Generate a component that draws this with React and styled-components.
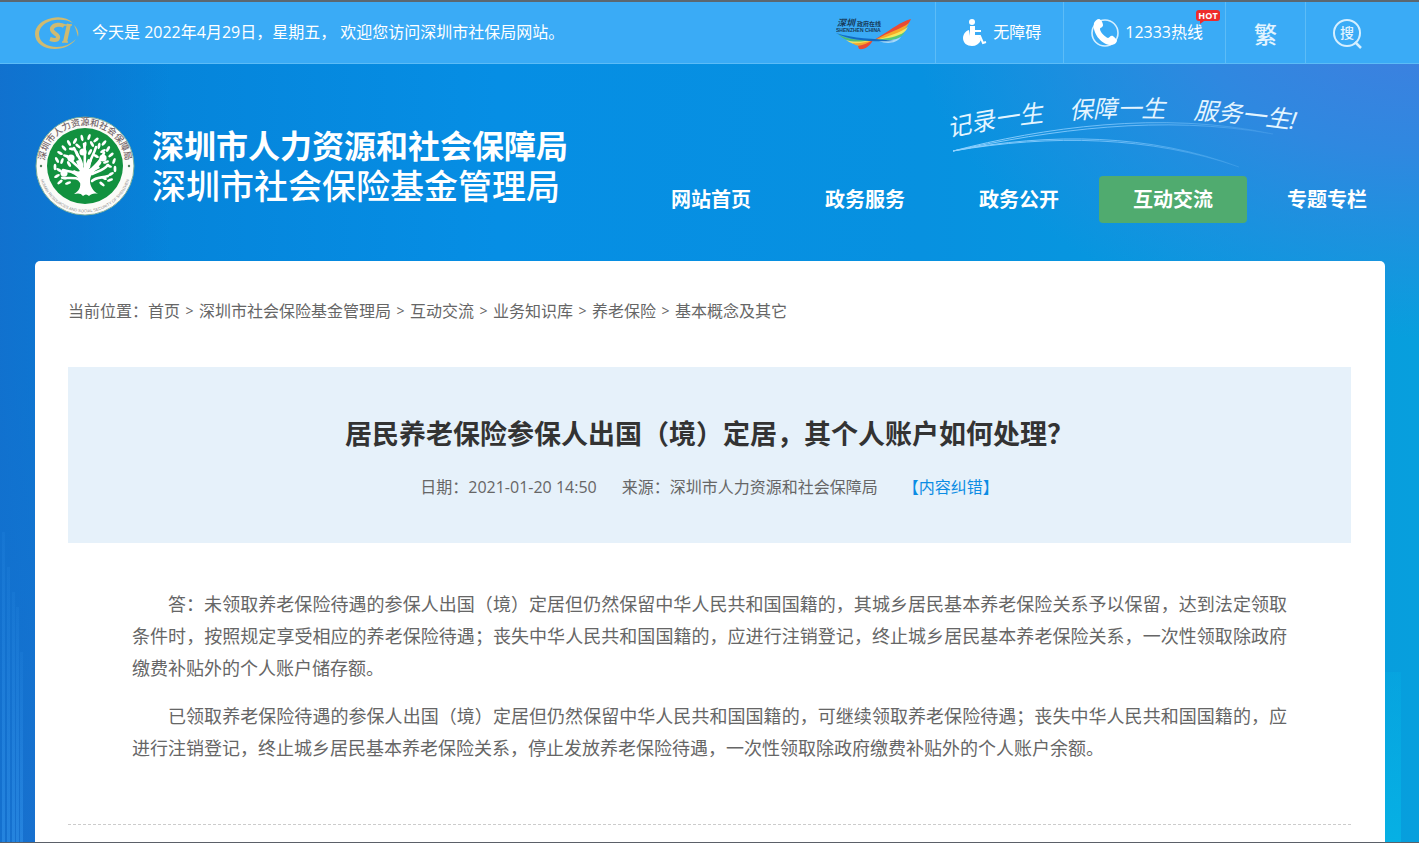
import React from "react";
import styled, { createGlobalStyle } from "styled-components";

const GlobalStyle = createGlobalStyle`
  * {
    box-sizing: border-box;
  }

  body {
    margin: 0;
    font-family: "Open Sans", "Noto Sans CJK SC", sans-serif;
    font-size: 16px;
    color: #666;
  }

  a {
    color: inherit;
    text-decoration: none;
  }
`;

const stripe = (left, height) =>
  `linear-gradient(rgba(60, 160, 245, 0.1), rgba(60, 160, 245, 0.4)) left ${left}px bottom 0 / 3px ${height}px no-repeat`;

const Page = styled.div`
  display: flex;
  flex-direction: column;
  min-height: 100vh;
  border-top: 2px solid #5b6770;
  border-bottom: 1px solid #5b6068;
  background:
    ${stripe(2, 310)},
    ${stripe(7, 275)},
    ${stripe(12, 250)},
    ${stripe(16, 235)},
    ${stripe(20, 190)},
    linear-gradient(rgba(6, 176, 228, 0.3), #06b0e4) right 18px bottom 0 / 16px 170px no-repeat,
    linear-gradient(to right, rgba(18, 112, 206, 0.9), rgba(18, 112, 206, 0) 12%),
    radial-gradient(ellipse 36% 40% at 100% 0%, #427ddf 0%, #2f88e0 45%, rgba(14, 148, 226, 0) 100%),
    linear-gradient(to bottom, rgba(44, 110, 206, 0) 45%, rgba(44, 110, 206, 0.85) 100%) left top / 35px 100% no-repeat,
    linear-gradient(to right, #0580d6 0%, #068ee4 35%, #0791e0 65%, #079fdd 100%);
`;

const TopBar = styled.div`
  display: flex;
  align-items: stretch;
  height: 62px;
  padding: 0 34px 0 35px;
  background: #3aabf6;
  border-bottom: 1px solid #5cbcf7;
  color: #fff;
`;

const Welcome = styled.div`
  display: flex;
  align-items: center;
  gap: 13px;
  flex: 1;
`;

const Label = styled.span`
  padding-bottom: 3px;
`;

const CityLink = styled.a`
  display: flex;
  align-items: center;
  padding-right: 22px;
`;

const Tool = styled.a`
  position: relative;
  display: flex;
  align-items: center;
  gap: 6px;
  padding: 0 22px 0 27px;
  border-left: 1px solid #5cbcf7;
`;

const ToolButton = styled.button`
  display: flex;
  align-items: center;
  justify-content: center;
  width: 80px;
  padding: 0;
  border: 0;
  border-left: 1px solid #5cbcf7;
  background: none;
  color: #e2f4ff;
  font-family: inherit;
  font-size: 23px;
  font-weight: 500;
  cursor: pointer;
`;

const HotBadge = styled.span`
  position: absolute;
  top: 8px;
  right: 5px;
  width: 24px;
  border-radius: 3px;
  background: #ee2b2b;
  color: #fff;
  font-size: 9px;
  font-weight: 700;
  line-height: 11px;
  text-align: center;

  &::after {
    content: "";
    position: absolute;
    left: 4px;
    top: 11px;
    border-top: 3px solid #ee2b2b;
    border-right: 4px solid transparent;
  }
`;

const Header = styled.header`
  display: flex;
  justify-content: space-between;
  padding: 32px 18px 38px 35px;
  color: #fff;
`;

const Brand = styled.a`
  display: flex;
  align-items: center;
  align-self: flex-start;
  gap: 17px;
  margin-top: 20px;
`;

const BrandNames = styled.div`
  line-height: 40px;
  white-space: nowrap;
`;

const BureauName = styled.div`
  font-size: 32px;
  font-weight: 700;
`;

const AgencyName = styled.div`
  font-size: 34px;
  font-weight: 500;
`;

const HeaderSide = styled.div`
  display: flex;
  flex-direction: column;
  align-items: flex-end;
`;

const SloganArt = styled.svg`
  display: block;
  margin-right: 80px;
  overflow: visible;
`;

const Nav = styled.nav`
  display: flex;
  gap: 6px;
`;

const NavLink = styled.a`
  width: 148px;
  border-radius: 4px;
  background: ${(props) => (props.$active ? "#50ab6f" : "transparent")};
  font-size: 20px;
  font-weight: 700;
  line-height: 47px;
  text-align: center;
`;

const Card = styled.main`
  flex: 1;
  margin: 0 34px 0 35px;
  padding: 34px 34px 0 33px;
  border-radius: 5px 5px 0 0;
  background: #fff;
`;

const Breadcrumb = styled.nav`
  display: flex;
  flex-wrap: wrap;
  margin-bottom: 40px;
  line-height: 32px;
`;

const Separator = styled.span`
  width: 19px;
  font-size: 14px;
  text-align: center;
`;

const TitlePanel = styled.div`
  padding: 47px 20px 40px;
  background: #e6f1fa;
  text-align: center;
`;

const Title = styled.h1`
  margin: 0 0 17px;
  color: #333;
  font-size: 27px;
  font-weight: 700;
  line-height: 40px;
`;

const Meta = styled.div`
  display: flex;
  justify-content: center;
  gap: 25px;
  line-height: 32px;
`;

const FixLink = styled.a`
  color: #0b8ce4;
`;

const Article = styled.article`
  padding: 45px 64px 60px;
  border-bottom: 1px dashed #ccc;
  font-size: 18px;
  line-height: 32px;
  text-align: justify;

  p {
    margin: 0 0 16px;
    text-indent: 2em;
  }

  p:last-child {
    margin-bottom: 0;
  }
`;

const InsuranceLogo = () => (
  <svg width="44" height="34" viewBox="0 0 44 34" fill="none" aria-hidden="true">
    <path
      d="M38 7C33 2 25 0 17 2 7 4 0 10 0 18c0 9 9 15 20 15 9 0 17-4 21-10-5 5-12 8-19 8C12 31 4 26 4 18 4 11 11 5 20 4c7-1 13 0 18 3z"
      fill="#cfba70"
    />
    <path d="M39 9c4 4 5 8 4 12-1-4-2-8-4-12z" fill="#cfba70" />
    <path
      d="M29 10c-3-2-10-2-12 2-2 5 8 6 6 10-1 3-5 2-8 1"
      stroke="#cfba70"
      strokeWidth="4"
    />
    <path d="M34 8l-4 18" stroke="#cfba70" strokeWidth="4" />
    <path d="M29 9h8M27 26h6" stroke="#cfba70" strokeWidth="1.5" />
  </svg>
);

const ShenzhenLogo = () => (
  <svg width="77" height="36" viewBox="0 0 77 36" aria-hidden="true">
    <path d="M75 4C64 7 56 14 46 20l-8 5c16-2 32-9 37-21z" fill="#e94b35" />
    <path d="M73 8c-8 6-20 9-34 17 15-2 29-6 34-17z" fill="#f7a928" />
    <path d="M72 12c-8 6-20 9-31 13 13 0 26-3 31-13z" fill="#f5e85c" />
    <path d="M69 17c-8 5-17 6-28 8 11 2 23 0 28-8z" fill="#56c879" />
    <path d="M65 22c-7 4-15 3-22 4 7 3 17 3 22-4z" fill="#a9d9f9" />
    <path d="M2 19c9 6 22 6 35 6-9 4-27 3-35-6z" fill="#4dbd73" />
    <path d="M10 25c9 3 18 1 27 0-8 6-19 6-27 0z" fill="#f3e05b" />
    <path d="M16 28c7 1 14-1 21-3-5 6-14 8-21 3z" fill="#f5a42d" />
    <path d="M22 31c6-1 10-3 15-6-3 6-8 10-14 9z" fill="#e94b35" />
    <path d="M0 18c18 6 36 5 58 8-20 1-44 0-58-8z" fill="#126bc2" />
    <text x="1" y="11" fontSize="9" fontWeight="700" fontStyle="italic" fill="#173b5b">
      深圳
    </text>
    <text x="21" y="11" fontSize="6" fontWeight="700" fill="#173b5b">
      政府在线
    </text>
    <text x="0" y="17" fontSize="5" fontWeight="700" fontFamily="Liberation Sans" fill="#173b5b">
      SHENZHEN CHINA
    </text>
  </svg>
);

const WheelchairIcon = () => (
  <svg width="24" height="30" viewBox="0 0 24 30" fill="none" aria-hidden="true">
    <circle cx="9" cy="4" r="3" fill="#fff" />
    <path d="M7 8h5v4h6v2h-6v4H7z" fill="#fff" />
    <path d="M6 12C2 13 0 17 0 20c0 5 4 8 9 8 4 0 7-2 9-6l-2-4H7z" fill="#fff" />
    <path d="M11 18h6l3 7 3-1" stroke="#fff" strokeWidth="2" />
  </svg>
);

const PhoneIcon = () => (
  <svg width="28" height="30" viewBox="0 0 28 30" fill="none" aria-hidden="true">
    <circle cx="14" cy="15" r="13" stroke="#d5efff" strokeWidth="1.6" />
    <path
      d="M3 5c1-2 3-4 5-4s4 4 4 6c0 3-3 2-3 4 0 3 5 8 8 9 2 0 2-3 5-2 1 1 4 3 4 5-1 3-4 4-7 4C10 26 1 15 3 5z"
      fill="#fff"
    />
  </svg>
);

const SearchIcon = () => (
  <svg width="32" height="32" viewBox="0 0 32 32" fill="none" aria-hidden="true">
    <circle cx="17" cy="16" r="13" stroke="#d5efff" strokeWidth="2" />
    <path d="M25 25l6 6" stroke="#d5efff" strokeWidth="2.5" />
    <text x="17" y="21" fontSize="14" textAnchor="middle" fill="#e2f4ff">
      搜
    </text>
  </svg>
);

// leaves around the crown: x, y, rotation
const leaves = [
  [25, 37, 30], [29, 32, 50], [22, 44, 60], [27, 45, 110], [31, 40, 20],
  [34, 27, 60], [37, 33, 10], [40, 25, 120], [43, 30, 40], [47, 22, 80],
  [50, 29, 100], [54, 21, 110], [57, 28, 60], [61, 24, 140], [64, 30, 100],
  [69, 27, 130], [68, 35, 150], [73, 33, 120], [76, 39, 140], [71, 46, 160],
  [79, 45, 110], [74, 50, 20], [80, 53, 90], [76, 58, 150], [69, 62, 30],
  [75, 64, 160], [20, 51, 90], [24, 54, 30], [22, 60, 150], [29, 62, 10],
  [25, 66, 140], [34, 48, 60], [55, 36, 120], [61, 40, 30], [64, 48, 130],
  [42, 38, 80], [33, 67, 160], [67, 68, 40],
];

const Seal = () => (
  <svg width="100" height="100" viewBox="0 0 100 100" fill="none" aria-hidden="true">
    <defs>
      <path id="ring-top" d="M9.6 45A40.7 40.7 0 0 1 90.4 45" />
      <path id="ring-bottom" d="M4 56A46.4 46.4 0 0 0 96 56" />
    </defs>
    <circle cx="50" cy="50" r="49" fill="#fbfbf8" stroke="#7cae9b" />
    <circle cx="50" cy="50" r="38" fill="#12913f" />
    <text fontSize="9" fontWeight="500" fill="#75666a">
      <textPath href="#ring-top" startOffset="50%" textAnchor="middle">
        深圳市人力资源和社会保障局
      </textPath>
    </text>
    <text fontSize="4" fill="#8b8a8a" fontFamily="Liberation Sans">
      <textPath href="#ring-bottom" startOffset="50%" textAnchor="middle">
        HUMAN RESOURCES AND SOCIAL SECURITY OF SHENZHEN
      </textPath>
    </text>
    <circle cx="6" cy="50" r="1.2" fill="#4f7d5c" />
    <circle cx="94" cy="50" r="1.2" fill="#4f7d5c" />
    <path
      d="M39 78c5-3 7-7 6-12-1-4-4-7-9-9l3-3c2 1 4 2 6 1l-4-10 3-1 5 8 4-9 4 1-3 9 9-4 2 3c-7 3-10 8-10 13 0 5 3 10 8 13-4-1-7 0-9 2-2-2-4-2-6 0-2-3-5-3-9-2z"
      fill="#fff"
    />
    <g stroke="#fff" strokeWidth="2.6" strokeLinecap="round">
      <path d="M46 66c-3-5-8-4-16-4M43 58c-4-3-9-2-15-4M46 54c-3-5-8-6-14-14M47 50c0-6-5-11-8-18" />
      <path d="M50 52c-1-8 1-15-1-24M54 51c0-7 5-12 7-20M56 54c4-5 9-7 13-17M57 58c6-3 11-3 16-9M57 65c4-4 10-3 16-5" />
    </g>
    <g fill="#fff">
      <circle cx="36" cy="42" r="3.6" />
      <circle cx="48" cy="36" r="3.6" />
      <circle cx="68" cy="42" r="3.6" />
      <circle cx="29" cy="57" r="3.6" />
      {leaves.map(([x, y, angle]) => (
        <ellipse
          key={`${x}-${y}`}
          cx={x}
          cy={y}
          rx="3.2"
          ry="1.4"
          transform={`rotate(${angle} ${x} ${y})`}
        />
      ))}
    </g>
  </svg>
);

const Slogan = () => (
  <SloganArt width="380" height="80" viewBox="0 0 380 80" fill="none">
    <defs>
      <path id="slogan-line" d="M4 42C120 15 240 15 378 37" />
      <linearGradient id="swoosh" x1="0" x2="1" y1="0" y2="0">
        <stop offset="0" stopColor="#8fd2ff" />
        <stop offset="0.6" stopColor="#7cc4fa" stopOpacity="0.8" />
        <stop offset="1" stopColor="#7cc4fa" stopOpacity="0.1" />
      </linearGradient>
    </defs>
    <path d="M12 55C100 32 220 14 332 38 220 18 110 34 12 55z" stroke="url(#swoosh)" />
    <path d="M12 55C110 36 210 38 298 71 210 40 110 38 12 55z" stroke="url(#swoosh)" />
    <g fontSize="24" fontStyle="italic" fill="#e4f5ff">
      <text>
        <textPath href="#slogan-line" startOffset="4">记录一生</textPath>
      </text>
      <text>
        <textPath href="#slogan-line" startOffset="126">保障一生</textPath>
      </text>
      <text>
        <textPath href="#slogan-line" startOffset="250">服务一生!</textPath>
      </text>
    </g>
  </SloganArt>
);

const App = () => {
  const navItems = [
    { text: "网站首页" },
    { text: "政务服务" },
    { text: "政务公开" },
    { text: "互动交流", active: true },
    { text: "专题专栏" },
  ];

  const crumbs = [
    "首页",
    "深圳市社会保险基金管理局",
    "互动交流",
    "业务知识库",
    "养老保险",
    "基本概念及其它",
  ];

  return (
    <Page>
      <GlobalStyle />

      <TopBar>
        <Welcome>
          <InsuranceLogo />
          <Label>今天是 2022年4月29日，星期五， 欢迎您访问深圳市社保局网站。</Label>
        </Welcome>
        <CityLink href="#" aria-label="深圳政府在线">
          <ShenzhenLogo />
        </CityLink>
        <Tool href="#">
          <WheelchairIcon />
          <Label>无障碍</Label>
        </Tool>
        <Tool href="#">
          <PhoneIcon />
          <Label>12333热线</Label>
          <HotBadge>HOT</HotBadge>
        </Tool>
        <ToolButton type="button">繁</ToolButton>
        <ToolButton type="button" aria-label="搜索">
          <SearchIcon />
        </ToolButton>
      </TopBar>

      <Header>
        <Brand href="#">
          <Seal />
          <BrandNames>
            <BureauName>深圳市人力资源和社会保障局</BureauName>
            <AgencyName>深圳市社会保险基金管理局</AgencyName>
          </BrandNames>
        </Brand>
        <HeaderSide>
          <Slogan />
          <Nav>
            {navItems.map((item) => (
              <NavLink key={item.text} href="#" $active={item.active}>
                {item.text}
              </NavLink>
            ))}
          </Nav>
        </HeaderSide>
      </Header>

      <Card>
        <Breadcrumb>
          <span>当前位置：</span>
          {crumbs.map((crumb, index) => (
            <React.Fragment key={crumb}>
              {index > 0 && <Separator>&gt;</Separator>}
              <a href="#">{crumb}</a>
            </React.Fragment>
          ))}
        </Breadcrumb>

        <TitlePanel>
          <Title>居民养老保险参保人出国（境）定居，其个人账户如何处理？</Title>
          <Meta>
            <span>日期：2021-01-20 14:50</span>
            <span>来源：深圳市人力资源和社会保障局</span>
            <FixLink href="#">【内容纠错】</FixLink>
          </Meta>
        </TitlePanel>

        <Article>
          <p>
            答：未领取养老保险待遇的参保人出国（境）定居但仍然保留中华人民共和国国籍的，其城乡居民基本养老保险关系予以保留，达到法定领取条件时，按照规定享受相应的养老保险待遇；丧失中华人民共和国国籍的，应进行注销登记，终止城乡居民基本养老保险关系，一次性领取除政府缴费补贴外的个人账户储存额。
          </p>
          <p>
            已领取养老保险待遇的参保人出国（境）定居但仍然保留中华人民共和国国籍的，可继续领取养老保险待遇；丧失中华人民共和国国籍的，应进行注销登记，终止城乡居民基本养老保险关系，停止发放养老保险待遇，一次性领取除政府缴费补贴外的个人账户余额。
          </p>
        </Article>
      </Card>
    </Page>
  );
};

export default App;
